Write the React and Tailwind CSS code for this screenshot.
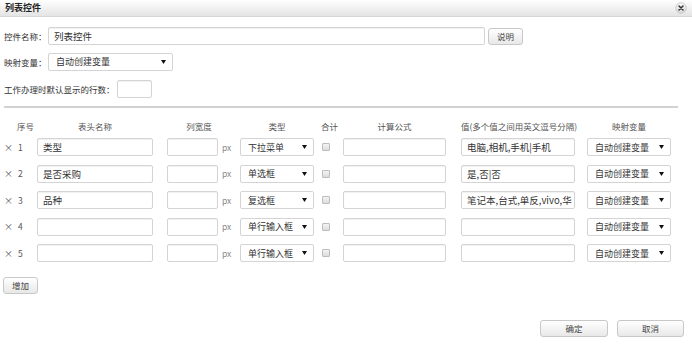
import React from 'react';

const rows = [
  { name: '类型', type: '下拉菜单', value: '电脑,相机,手机|手机' },
  { name: '是否采购', type: '单选框', value: '是,否|否' },
  { name: '品种', type: '复选框', value: '笔记本,台式,单反,vivo,华' },
  { name: '', type: '单行输入框', value: '' },
  { name: '', type: '单行输入框', value: '' },
];

const Field = ({ className = '', children }) => (
  <div
    className={`h-[18px] border border-[#d4d4d4] rounded-[2px] bg-white shadow-[inset_0_1px_1px_rgba(0,0,0,0.06)] flex items-center px-[5px] text-[9.5px] text-[#333] overflow-hidden ${className}`}
  >
    {children}
  </div>
);

const Select = ({ className = '', children }) => (
  <div
    className={`h-[18px] border border-[#d4d4d4] rounded-[2px] bg-white flex items-center pl-[7px] pr-[6px] text-[9px] text-[#333] overflow-hidden ${className}`}
  >
    <span>{children}</span>
    <svg className="ml-auto shrink-0" width="5" height="4" viewBox="0 0 5 4">
      <path d="M0 0 H5 L2.5 4 Z" fill="#111" />
    </svg>
  </div>
);

const Button = ({ className = '', children }) => (
  <div
    className={`h-[17px] border border-[#c8c8c8] rounded-[3px] bg-gradient-to-b from-white to-[#e8e8e8] flex items-center justify-center text-[8.5px] text-[#444] ${className}`}
  >
    {children}
  </div>
);

const Check = () => (
  <div className="w-[8px] h-[8px] border border-[#bdbdbd] rounded-[1px] bg-gradient-to-b from-[#f4f4f4] to-[#dcdcdc]" />
);

export default function App() {
  return (
    <div className="w-[692px] h-[345px] bg-white flex flex-col whitespace-nowrap text-[8.5px] text-[#333] font-['Noto_Sans_CJK_SC','Noto_Sans',sans-serif] overflow-hidden">
      {/* title bar */}
      <div className="h-[17px] shrink-0 bg-gradient-to-b from-white to-[#e4e4e4] border-b border-[#d6d6d6] flex items-center justify-between pl-[5px] pr-[5px]">
        <span className="font-bold text-[9px] text-[#222]">列表控件</span>
        <svg width="12" height="12" viewBox="0 0 12 12">
          <defs>
            <linearGradient id="cg" x1="0" y1="0" x2="0" y2="1">
              <stop offset="0" stopColor="#fafafa" />
              <stop offset="1" stopColor="#d8d8d8" />
            </linearGradient>
          </defs>
          <circle cx="6" cy="6" r="5.3" fill="url(#cg)" stroke="#c4c4c4" strokeWidth="0.8" />
          <path d="M4 4 L8 8 M8 4 L4 8" stroke="#333" strokeWidth="1.5" strokeLinecap="round" />
        </svg>
      </div>

      {/* top form */}
      <div className="pl-[4px] flex flex-col">
        <div className="flex items-center mt-[10px]">
          <span className="w-[44px]">控件名称：</span>
          <Field className="w-[437px]">列表控件</Field>
          <Button className="w-[35px] ml-[3px]">说明</Button>
        </div>
        <div className="flex items-center mt-[8px]">
          <span className="w-[44px]">映射变量：</span>
          <Select className="w-[125px]">自动创建变量</Select>
        </div>
        <div className="flex items-center mt-[9px]">
          <span className="w-[113px]">工作办理时默认显示的行数：</span>
          <Field className="w-[35px]" />
        </div>
        <div className="mt-[8px] h-[2px] w-[674px] bg-[#d2d2d2]" />
      </div>

      {/* table header */}
      <div className="mt-[10px] h-[16px] flex items-center text-[#555]">
        <div className="w-[37px] pl-[17px]">序号</div>
        <div className="w-[130px]"><div className="w-[116px] text-center">表头名称</div></div>
        <div className="w-[73px]"><div className="w-[64px] text-center">列宽度</div></div>
        <div className="w-[82px]"><div className="w-[74px] text-center">类型</div></div>
        <div className="w-[21px] flex justify-center pr-[6px]">合计</div>
        <div className="w-[118px]"><div className="w-[103px] text-center">计算公式</div></div>
        <div className="w-[126px]"><div className="w-[114px] text-center">值(多个值之间用英文逗号分隔)</div></div>
        <div className="w-[84px] text-center">映射变量</div>
      </div>

      {/* rows */}
      {rows.map((r, i) => (
        <div key={i} className="h-[26.5px] shrink-0 flex items-center">
          <div className="w-[37px] flex items-center text-[#555]">
            <span className="w-[13px] pl-[4px] text-[9px]">×</span>
            <span className="pl-[5px]">{i + 1}</span>
          </div>
          <div className="w-[130px]"><Field className="w-[116px]">{r.name}</Field></div>
          <div className="w-[73px] flex items-center">
            <Field className="w-[51px]" />
            <span className="ml-[4px] text-[#888]">px</span>
          </div>
          <div className="w-[82px]"><Select className="w-[74px]">{r.type}</Select></div>
          <div className="w-[21px] flex"><Check /></div>
          <div className="w-[118px]"><Field className="w-[103px]" /></div>
          <div className="w-[126px]"><Field className="w-[114px]">{r.value}</Field></div>
          <Select className="w-[84px]">自动创建变量</Select>
        </div>
      ))}

      <div className="pl-[3px] mt-[10px]">
        <Button className="w-[35px]">增加</Button>
      </div>

      {/* footer */}
      <div className="mt-auto mb-[8px] flex justify-end gap-[9px] pr-[8px]">
        <Button className="w-[68px]">确定</Button>
        <Button className="w-[67px]">取消</Button>
      </div>
    </div>
  );
}
